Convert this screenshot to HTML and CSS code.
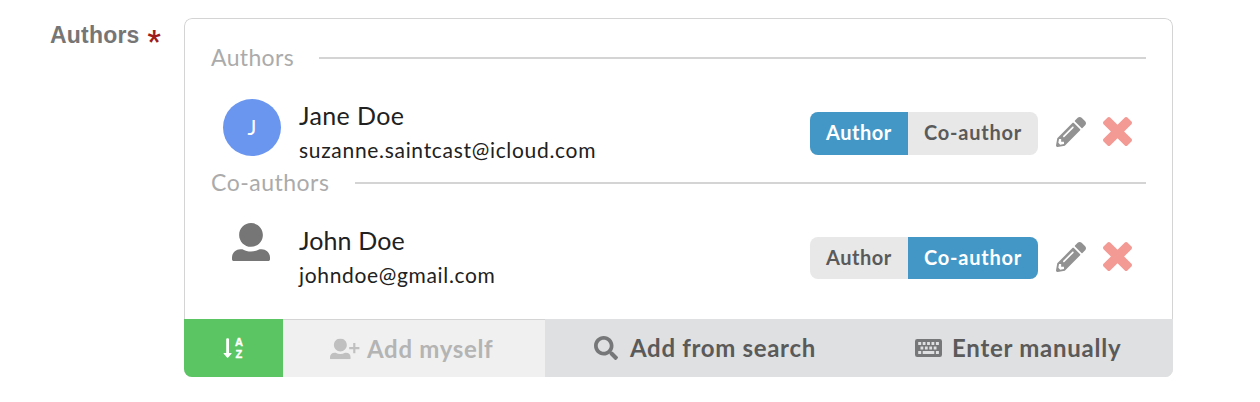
FILE: index.html
```html
<!DOCTYPE html>
<html lang="en">
<head>
<meta charset="utf-8">
<title>Authors</title>
<link rel="stylesheet" href="styles.css">
</head>
<body>
<svg width="0" height="0" class="defs">
  <symbol id="user" viewBox="0 0 512 512"><path d="M96 160C96 71.6 167.6 0 256 0s160 71.6 160 160-71.6 160-160 160S96 248.4 96 160zm304 192h-28.6c-71.9 42.6-158.9 42.6-230.8 0H112C50.1 352 0 402.1 0 464v24c0 13.3 10.7 24 24 24h464c13.3 0 24-10.7 24-24v-24c0-61.900-50.100-112-112-112z"/></symbol>
  <symbol id="pencil" viewBox="0 0 512 512"><path d="M497.900 142.100l-46.100 46.100c-4.700 4.700-12.300 4.700-17 0l-111-111c-4.700-4.700-4.700-12.300 0-17l46.100-46.100c18.700-18.700 49.100-18.700 67.900 0l60.100 60.100c18.800 18.700 18.800 49.100 0 67.900zM284.200 99.800L21.600 362.400.4 483.900c-2.900 16.400 11.400 30.600 27.800 27.800l121.500-21.300 262.600-262.600c4.700-4.700 4.700-12.300 0-17l-111-111c-4.800-4.700-12.400-4.700-17.100 0zM124.100 339.900c-5.500-5.500-5.500-14.300 0-19.800l154-154c5.500-5.500 14.300-5.500 19.800 0s5.500 14.300 0 19.800l-154 154c-5.500 5.500-14.300 5.500-19.800 0zM88 424h48v36.300l-64.500 11.300-31.100-31.100L51.700 376H88v48z"/></symbol>
  <symbol id="times" viewBox="0 64 384 384"><path d="M323.100 441l53.900-53.900c9.400-9.400 9.400-24.500 0-33.900L279.800 256l97.200-97.200c9.400-9.400 9.400-24.500 0-33.900L323.100 71c-9.400-9.400-24.500-9.400-33.900 0L192 168.200 94.800 71c-9.400-9.400-24.500-9.400-33.900 0L7 124.900c-9.400 9.400-9.400 24.500 0 33.900l97.200 97.200L7 353.200c-9.400 9.400-9.400 24.500 0 33.900L60.900 441c9.400 9.400 24.500 9.400 33.900 0l97.200-97.200 97.200 97.200c9.300 9.300 24.500 9.300 33.900 0z"/></symbol>
</svg>
<div class="field">
  <div class="label"><span class="label-text">Authors</span><span class="required">*</span></div>
  <div class="widget">
    <div class="list">
      <div class="divider"><span class="divider-text">Authors</span></div>
      <div class="person">
        <div class="picture"><div class="avatar">J</div></div>
        <div class="identity">
          <div class="name"><span class="jane">Jane Doe</span></div>
          <div class="email"><span class="jane-mail">suzanne.saintcast@icloud.com</span></div>
        </div>
        <div class="roles"><span class="role role-author active">Author</span><span class="role role-co">Co-author</span></div>
        <svg class="pencil"><use href="#pencil"/></svg>
        <svg class="times"><use href="#times"/></svg>
      </div>
      <div class="divider second"><span class="divider-text co">Co-authors</span></div>
      <div class="person">
        <div class="picture"><svg class="anonymous"><use href="#user"/></svg></div>
        <div class="identity">
          <div class="name"><span class="john">John Doe</span></div>
          <div class="email"><span class="john-mail">johndoe@gmail.com</span></div>
        </div>
        <div class="roles short"><span class="role role-author">Author</span><span class="role role-co active">Co-author</span></div>
        <svg class="pencil"><use href="#pencil"/></svg>
        <svg class="times"><use href="#times"/></svg>
      </div>
    </div>
    <div class="actions">
      <div class="action sort">
        <svg width="10" height="22" viewBox="0 0 10 22"><path d="M3.200 2.200q0-1 1-1h.8q1 0 1 1V16h2.200q.9 0 .3.800L5.200 20.600q-.6.600-1.200 0L.7 16.800q-.6-.8.3-.8h2.200z"/></svg>
        <div class="order"><span>A</span><span>Z</span></div>
      </div>
      <div class="action myself">
        <svg width="30" height="22" viewBox="0 0 30 22"><g transform="translate(0 .5) scale(.0405)"><use href="#user" width="512" height="512"/></g><path d="M23.200 5h2.200v4h4v2.200h-4v4h-2.200v-4h-4V9h4z"/></svg>
        <span class="t-myself">Add myself</span>
      </div>
      <div class="action search">
        <svg width="24" height="24" viewBox="0 0 512 512"><path d="M505 442.700L405.300 343c-4.500-4.500-10.600-7-17-7H372c27.600-35.300 44-79.700 44-128C416 93.100 322.900 0 208 0S0 93.100 0 208s93.100 208 208 208c48.300 0 92.700-16.400 128-44v16.300c0 6.400 2.500 12.500 7 17l99.700 99.700c9.400 9.400 24.600 9.400 33.900 0l28.300-28.300c9.400-9.400 9.400-24.600.1-34zM208 336c-70.700 0-128-57.200-128-128 0-70.700 57.200-128 128-128 70.700 0 128 57.200 128 128 0 70.700-57.200 128-128 128z"/></svg>
        <span class="t-search">Add from search</span>
      </div>
      <div class="action manual">
        <svg width="27" height="18" viewBox="0 0 27 18"><path fill-rule="evenodd" d="M2.200 0h22.600Q27 0 27 2.200v13.600Q27 18 24.800 18H2.200Q0 18 0 15.800V2.200Q0 0 2.200 0zM3.200 3v3h3V3zM7.700 3v3h2.800V3zM12.100 3v3h2.800V3zM16.500 3v3h2.800V3zM20.900 3v3h3V3zM5.500 7.500v3h2.800v-3zM9.900 7.500v3h2.800v-3zM14.300 7.500v3h2.800v-3zM18.700 7.500v3h2.800v-3zM3.200 12v3h3v-3zM7.700 12v3h11.600v-3zM20.900 12v3h3v-3z"/></svg>
        <span class="t-manual">Enter manually</span>
      </div>
    </div>
  </div>
</div>
</body>
</html>
```
FILE: styles.css
```css
* { box-sizing: border-box; }
body { margin: 0; background: #fff; font-family: Lato, sans-serif; color: #212121; }
svg { display: block; flex: none; fill: currentColor; }
.defs { position: absolute; }
span { white-space: nowrap; }
.field { display: flex; padding: 18px 0 0 50px; }
.label { display: flex; width: 134px; gap: 9px; font: bold 23px/34px "Liberation Sans", sans-serif; color: #767676; }
.label-text { letter-spacing: .2px; }
.required { color: #9f1d18; font: 700 29px/46px Roboto, sans-serif; margin-left: -1px; }
.widget { width: 989px; height: 359px; border-radius: 8px; overflow: hidden; display: flex; flex-direction: column; }
.list { height: 301px; border: 1px solid #d4d4d5; border-bottom: 0; border-radius: 8px 8px 0 0; padding: 23px 26px 0; }
.divider { height: 32px; display: flex; align-items: center; gap: 26px; font-size: 23px; color: #ababab; }
.divider::after { content: ""; flex: 1; height: 2px; background: #d4d4d5; }
.divider-text { width: 82px; letter-spacing: .35px; line-height: 28px; padding-bottom: 3px; }
.co { width: 118px; letter-spacing: .5px; }
.person { height: 93px; display: flex; align-items: flex-start; padding-top: 25px; }
.picture { width: 88px; padding-left: 12px; }
.avatar { width: 58px; height: 57px; border-radius: 50%; background: #6b96f0; color: #fff; font-size: 21px; line-height: 55px; text-align: center; }
.anonymous { width: 38px; height: 38px; margin: -1px 0 0 9px; color: #767676; }
.identity { width: 511px; margin-top: -2px; }
.name { font-size: 25px; line-height: 36px; }
.email { font-size: 21px; line-height: 34px; }
.jane { letter-spacing: .38px; }
.john { letter-spacing: .12px; }
.jane-mail { letter-spacing: .69px; }
.john-mail { letter-spacing: .66px; }
.roles { display: flex; width: 228px; height: 43px; margin-top: 13px; border-radius: 8px; overflow: hidden; background: #e8e8e8; color: #5a5a5a; font-size: 20px; font-weight: bold; line-height: 41px; }
.short { height: 42px; }
.role { padding-left: 16px; }
.role-author { width: 98px; letter-spacing: .5px; }
.role-co { width: 130px; letter-spacing: .78px; }
.active { background: #4397c7; color: #fff; }
.pencil { width: 30px; height: 30px; margin: 18px 0 0 18px; color: #929292; }
.times { width: 29px; height: 29px; margin: 18px 0 0 17px; color: #f49a94; }
.actions { height: 58px; display: flex; border-top: 1px solid #d4d4d5; background: #dfe0e1; color: #5a5a5a; font-size: 24px; font-weight: bold; }
.action { display: flex; align-items: center; }
.action svg { color: #767778; }
.sort { width: 99px; margin-top: -1px; background: #5bc463; padding-left: 39px; gap: 2px; }
.action.sort svg { color: #fff; }
.order { display: flex; flex-direction: column; align-items: center; color: #fff; font: bold 11px/12px "Liberation Sans", sans-serif; -webkit-text-stroke: .4px #fff; }
.myself { width: 262px; padding-left: 47px; gap: 7px; background: #f0f0f0; color: #b4b4b4; }
.action.myself svg { color: #c0c0c0; }
.search { width: 318px; margin-top: -1px; padding-left: 49px; gap: 12px; background: #dfe0e1; }
.manual { width: 310px; margin-top: -1px; padding-left: 52px; gap: 10px; background: #dfe0e1; }
.t-myself { letter-spacing: .68px; padding-bottom: 1px; }
.t-search { letter-spacing: .68px; padding-bottom: 1px; }
.t-manual { letter-spacing: .74px; padding-bottom: 1px; }
```
